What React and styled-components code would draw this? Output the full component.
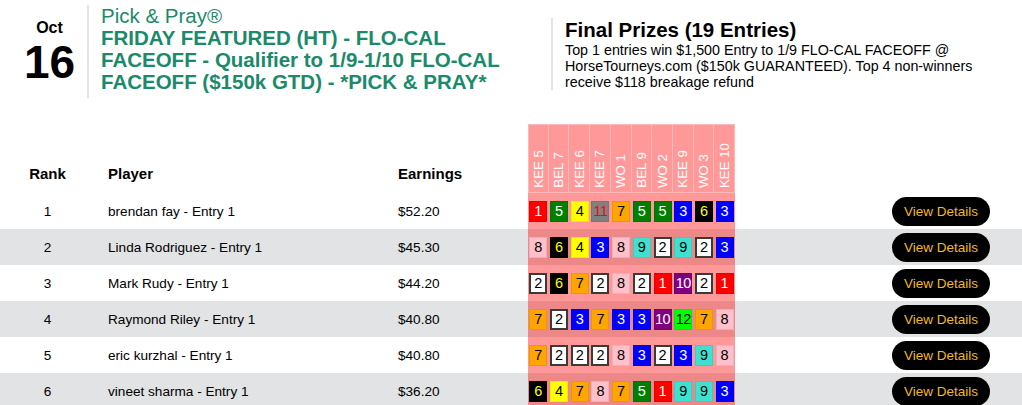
import React from "react";
import styled, { createGlobalStyle } from "styled-components";

const races = ["KEE 5", "BEL 7", "KEE 6", "KEE 7", "WO 1", "BEL 9", "WO 2", "KEE 9", "WO 3", "KEE 10"];

const entries = [
  { rank: 1, player: "brendan fay - Entry 1", earnings: "$52.20", picks: [1, 5, 4, 11, 7, 5, 5, 3, 6, 3] },
  { rank: 2, player: "Linda Rodriguez - Entry 1", earnings: "$45.30", picks: [8, 6, 4, 3, 8, 9, 2, 9, 2, 3] },
  { rank: 3, player: "Mark Rudy - Entry 1", earnings: "$44.20", picks: [2, 6, 7, 2, 8, 2, 1, 10, 2, 1] },
  { rank: 4, player: "Raymond Riley - Entry 1", earnings: "$40.80", picks: [7, 2, 3, 7, 3, 3, 10, 12, 7, 8] },
  { rank: 5, player: "eric kurzhal - Entry 1", earnings: "$40.80", picks: [7, 2, 2, 2, 8, 3, 2, 3, 9, 8] },
  { rank: 6, player: "vineet sharma - Entry 1", earnings: "$36.20", picks: [6, 4, 7, 8, 7, 5, 1, 9, 9, 3] },
];

// saddle cloth colours: [background, number]
const saddle = {
  1: ["#ff0000", "#ffffff"],
  2: ["#ffffff", "#000000"],
  3: ["#0000ff", "#ffffff"],
  4: ["#ffff00", "#000000"],
  5: ["#008000", "#ffffff"],
  6: ["#000000", "#ffff00"],
  7: ["#ffa500", "#000000"],
  8: ["#ffc0cb", "#000000"],
  9: ["#40e0d0", "#000000"],
  10: ["#800080", "#ffffff"],
  11: ["#808080", "#ff0000"],
  12: ["#00ff00", "#000000"],
};

const GlobalStyle = createGlobalStyle`
  body {
    margin: 0;
    background: #ffffff;
    font-family: "Liberation Sans", Arial, sans-serif;
    color: #000000;
  }
`;

const Page = styled.div`
  width: 1022px;
`;

const Header = styled.div`
  display: flex;
  align-items: flex-start;
  padding-top: 5px;
  margin-bottom: 26px;
`;

const DateBlock = styled.div`
  width: 75px;
  padding-left: 12px;
  align-self: center;
  display: flex;
  flex-direction: column;
  align-items: center;
`;

const Month = styled.div`
  font-size: 16px;
  font-weight: 700;
  line-height: 18px;
`;

const Day = styled.div`
  font-size: 46px;
  font-weight: 700;
  line-height: 46px;
  margin-top: 2px;
`;

const TitleBlock = styled.div`
  width: 430px;
  border-left: 2px solid #e4e4e4;
  padding: 0 0 5px 12px;
  color: #1a8a6a;
  font-size: 20.5px;
  line-height: 22px;
`;

const Brand = styled.div`
  font-weight: 400;
`;

const Title = styled.div`
  font-weight: 700;
`;

const PrizeBlock = styled.div`
  width: 430px;
  margin: 13px 0 0 20px;
  border-left: 2px solid #e4e4e4;
  padding-left: 12px;
`;

const PrizeTitle = styled.div`
  font-size: 20.5px;
  font-weight: 700;
  line-height: 24px;
`;

const PrizeText = styled.div`
  font-size: 14.3px;
  line-height: 16px;
`;

const Row = styled.div`
  display: grid;
  grid-template-columns: 95px 303px 130px 207px 1fr;
  height: ${(p) => (p.$head ? 69 : 36)}px;
  background: ${(p) => (p.$striped ? "#e2e3e5" : "#ffffff")};
  font-size: 13.6px;
`;

const HeadCell = styled.div`
  align-self: end;
  padding: 0 0 11px ${(p) => p.$indent || 0}px;
  text-align: ${(p) => (p.$center ? "center" : "left")};
  font-size: 15px;
  font-weight: 700;
  line-height: 17px;
`;

const Cell = styled.div`
  display: flex;
  align-items: center;
  justify-content: ${(p) => (p.$center ? "center" : "flex-start")};
  padding-left: ${(p) => p.$indent || 0}px;
`;

const Races = styled.div`
  display: grid;
  grid-template-columns: repeat(10, 1fr);
  background: rgba(255, 0, 0, 0.4);
`;

const RaceLabel = styled.div`
  display: flex;
  align-items: flex-end;
  justify-content: center;
  padding-bottom: 4px;
  border: 1px solid rgba(255, 255, 255, 0.3);
  border-left: none;
  &:first-child {
    border-left: 1px solid rgba(255, 255, 255, 0.3);
  }
`;

const RaceText = styled.span`
  writing-mode: vertical-rl;
  transform: rotate(180deg);
  color: #ffffff;
  font-size: 13.3px;
  line-height: 15px;
  white-space: nowrap;
`;

const Picks = styled.div`
  display: grid;
  grid-template-columns: repeat(10, 1fr);
  justify-items: center;
  align-items: center;
  background: rgba(255, 0, 0, 0.4);
`;

const Saddle = styled.div`
  box-sizing: border-box;
  width: 18px;
  height: 21px;
  display: flex;
  align-items: center;
  justify-content: center;
  background: ${(p) => saddle[p.$num][0]};
  color: ${(p) => saddle[p.$num][1]};
  border: ${(p) => (p.$num === 2 ? "2px solid #3a3a3a" : "1px solid rgba(0, 0, 0, 0.08)")};
  font-size: 14.5px;
  letter-spacing: ${(p) => (p.$num > 9 ? "-0.5px" : "0")};
`;

const ActionCell = styled.div`
  display: flex;
  align-items: center;
  justify-content: flex-end;
  padding-right: 32px;
`;

const DetailsButton = styled.button`
  height: 29px;
  padding: 0 12px;
  border: none;
  border-radius: 15px;
  background: #000000;
  color: #f0b91a;
  font-family: "Liberation Sans", Arial, sans-serif;
  font-size: 13.5px;
  cursor: pointer;
`;

const App = () => {
  return (
    <Page>
      <GlobalStyle />
      <Header>
        <DateBlock>
          <Month>Oct</Month>
          <Day>16</Day>
        </DateBlock>
        <TitleBlock>
          <Brand>Pick &amp; Pray®</Brand>
          <Title>
            FRIDAY FEATURED (HT) - FLO-CAL FACEOFF - Qualifier to 1/9-1/10 FLO-CAL FACEOFF ($150k GTD) - *PICK &amp;
            PRAY*
          </Title>
        </TitleBlock>
        <PrizeBlock>
          <PrizeTitle>Final Prizes (19 Entries)</PrizeTitle>
          <PrizeText>
            Top 1 entries win $1,500 Entry to 1/9 FLO-CAL FACEOFF @ HorseTourneys.com ($150k GUARANTEED). Top 4
            non-winners receive $118 breakage refund
          </PrizeText>
        </PrizeBlock>
      </Header>

      <Row $head>
        <HeadCell $center>Rank</HeadCell>
        <HeadCell $indent={13}>Player</HeadCell>
        <HeadCell>Earnings</HeadCell>
        <Races>
          {races.map((race) => (
            <RaceLabel key={race}>
              <RaceText>{race}</RaceText>
            </RaceLabel>
          ))}
        </Races>
        <div />
      </Row>

      {entries.map((entry, i) => (
        <Row key={entry.rank} $striped={i % 2 === 1}>
          <Cell $center>{entry.rank}</Cell>
          <Cell $indent={13}>{entry.player}</Cell>
          <Cell>{entry.earnings}</Cell>
          <Picks>
            {entry.picks.map((num, j) => (
              <Saddle key={j} $num={num}>
                {num}
              </Saddle>
            ))}
          </Picks>
          <ActionCell>
            <DetailsButton>View Details</DetailsButton>
          </ActionCell>
        </Row>
      ))}
    </Page>
  );
};

export default App;
